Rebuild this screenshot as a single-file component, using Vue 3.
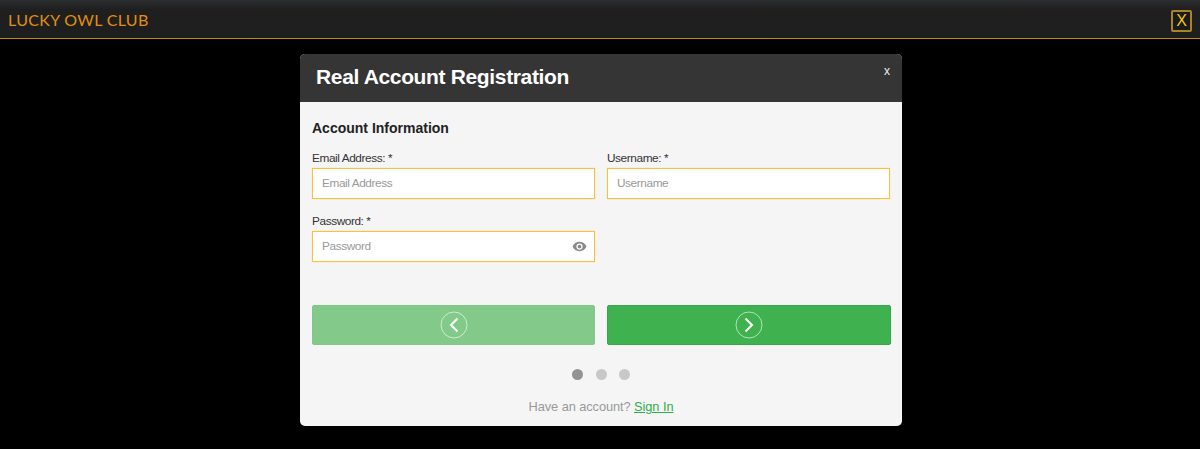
<script setup>
const dots = [true, false, false]
</script>

<template>
  <div class="page">
    <header class="topbar">
      <span class="brand">LUCKY OWL CLUB</span>
      <button class="exit">X</button>
    </header>
    <main class="stage">
      <section class="modal">
        <div class="modal-head">
          <h1>Real Account Registration</h1>
          <span class="close">x</span>
        </div>
        <div class="modal-body">
          <h2>Account Information</h2>
          <div class="fields">
            <label class="field">
              <span>Email Address: *</span>
              <input type="text" placeholder="Email Address" />
            </label>
            <label class="field">
              <span>Username: *</span>
              <input type="text" placeholder="Username" />
            </label>
            <label class="field">
              <span>Password: *</span>
              <div class="pw">
                <input type="text" placeholder="Password" />
                <svg class="eye" viewBox="0 0 24 24" width="15" height="15">
                  <path fill="#8a8a8a" d="M12 4.5C7 4.5 2.7 7.6 1 12c1.7 4.4 6 7.500 11 7.500s9.300-3.100 11-7.500c-1.700-4.400-6-7.500-11-7.500zM12 17a5 5 0 1 1 0-10 5 5 0 0 1 0 10zm0-8a3 3 0 1 0 0 6 3 3 0 0 0 0-6z"/>
                </svg>
              </div>
            </label>
          </div>
          <div class="actions">
            <button class="nav prev">
              <svg viewBox="0 0 28 28" width="28" height="28">
                <circle cx="14" cy="14" r="13" fill="none" stroke="#fff" stroke-opacity=".6" stroke-width="1"/>
                <path d="M17.500 7.500 L11 14 L17.500 20.500" fill="none" stroke="#fff" stroke-width="2"/>
              </svg>
            </button>
            <button class="nav next">
              <svg viewBox="0 0 28 28" width="28" height="28">
                <circle cx="14" cy="14" r="13" fill="none" stroke="#fff" stroke-opacity=".6" stroke-width="1"/>
                <path d="M10.500 7.500 L17 14 L10.500 20.500" fill="none" stroke="#fff" stroke-width="2"/>
              </svg>
            </button>
          </div>
          <div class="dots">
            <i v-for="(on, n) in dots" :key="n" :class="{ on }"></i>
          </div>
          <p class="signin">Have an account? <a href="#">Sign In</a></p>
        </div>
      </section>
    </main>
  </div>
</template>

<style>
html, body { margin: 0; background: #000; }
</style>

<style scoped>
.page {
  width: 1200px;
  height: 449px;
  overflow: hidden;
  background: #000;
  font-family: "Liberation Sans", Arial, sans-serif;
}
.topbar {
  box-sizing: border-box;
  height: 39px;
  display: flex;
  align-items: center;
  justify-content: space-between;
  padding: 0 8px;
  background: linear-gradient(#2c2d2e, #1f1f20 25%, #1e1e1e);
  border-bottom: 1px solid #c08c0a;
}
.brand {
  font-family: Lato, sans-serif;
  font-size: 16px;
  font-weight: 400;
  letter-spacing: 0.33px;
  color: #e08f12;
}
.exit {
  box-sizing: border-box;
  width: 21px;
  height: 22px;
  margin-top: 4px;
  padding: 0;
  background: #1a1a1a;
  border: 2px solid #a88520;
  border-radius: 2px;
  color: #f5c800;
  font-family: "Liberation Sans", sans-serif;
  font-size: 16px;
  line-height: 18px;
}
.stage {
  display: flex;
  justify-content: center;
  padding-top: 15px;
  padding-left: 2px;
}
.modal {
  width: 602px;
  height: 372px;
  border-radius: 5px;
  overflow: hidden;
  background: #f5f5f5;
}
.modal-head {
  height: 48px;
  display: flex;
  justify-content: space-between;
  background: #353535;
  color: #fff;
}
h1 {
  margin: 0 0 0 16px;
  font-size: 21px;
  letter-spacing: -0.35px;
  line-height: 46px;
  font-weight: 700;
}
.close {
  margin: 9px 12px 0 0;
  font-size: 12px;
  line-height: 16px;
  color: #eee;
}
.modal-body {
  padding: 0 12px;
}
h2 {
  margin: 0;
  padding-top: 17px;
  font-size: 14px;
  line-height: 18px;
  font-weight: 700;
  color: #222;
}
.fields {
  display: grid;
  grid-template-columns: 283px 283px;
  column-gap: 12px;
  row-gap: 16px;
  margin-top: 15px;
}
.field {
  display: flex;
  flex-direction: column;
  font-size: 11.800px;
  letter-spacing: -0.4px;
  color: #333;
}
.field > span {
  line-height: 13px;
  margin-bottom: 3px;
}
input {
  box-sizing: border-box;
  width: 100%;
  height: 31px;
  padding: 0 9px 2px;
  background: #fff;
  border: 1px solid #f8c23c;
  box-shadow: 0 0 1px #fbd36f;
  border-radius: 0;
  outline: 0;
  font-family: inherit;
  font-size: 11.800px;
  letter-spacing: -0.4px;
  color: #333;
}
input::placeholder {
  color: #999;
  opacity: 1;
}
.pw {
  position: relative;
}
.eye {
  position: absolute;
  right: 8px;
  top: 8px;
}
.actions {
  display: grid;
  grid-template-columns: 283px 284px;
  column-gap: 12px;
  margin-top: 43px;
}
.nav {
  box-sizing: border-box;
  height: 40px;
  padding: 0;
  display: flex;
  align-items: center;
  justify-content: center;
  border: 1px solid transparent;
  border-radius: 2px;
}
.prev {
  background: #83ca8a;
  border-color: #80c888;
}
.next {
  background: #3fb14f;
  border-color: #38a848;
}
.dots {
  display: flex;
  justify-content: center;
  gap: 12.500px;
  margin-top: 24px;
}
.dots i {
  width: 11px;
  height: 11px;
  border-radius: 50%;
  background: #c8c8c8;
}
.dots i.on {
  background: #939393;
}
.signin {
  margin: 19px 0 0;
  text-align: center;
  font-size: 12.800px;
  letter-spacing: -0.07px;
  line-height: 16px;
  color: #999;
}
.signin a {
  color: #2fae4a;
}
</style>
